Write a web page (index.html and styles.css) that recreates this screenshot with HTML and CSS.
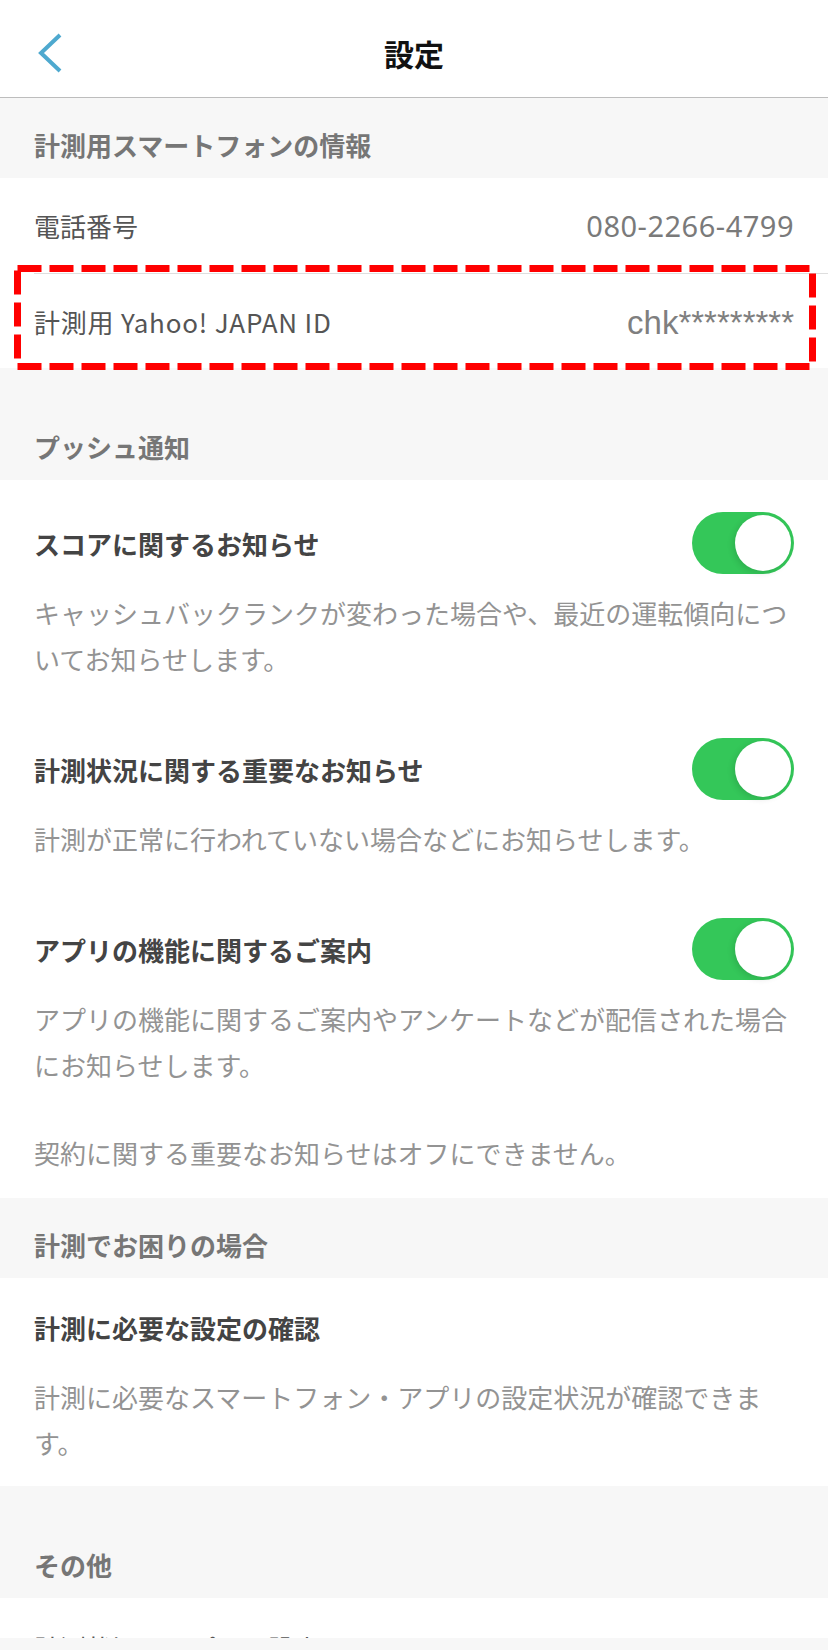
FILE: index.html
```html
<!DOCTYPE html>
<html lang="ja">
<head>
  <meta charset="UTF-8" />
  <meta name="viewport" content="width=device-width, initial-scale=1.0"/>
  <title>設定</title>
  <link rel="stylesheet" href="styles.css">
</head>
<body>

  <div class="screen">
    <header class="nav">
      <button class="nav-back" aria-label="戻る">
        <svg width="26" height="40" viewBox="0 0 26 40"><path d="M22 2 L3 20 L22 38" fill="none" stroke="#4ea9cf" stroke-width="4"/></svg>
      </button>
      <h1 class="nav-title">設定</h1>
      <span></span>
    </header>

    <div class="section-title">計測用スマートフォンの情報</div>
    <div class="info-list">
      <div class="info-row">
        <span class="info-label">電話番号</span>
        <span class="info-value">080-2266-4799</span>
      </div>
      <div class="info-row">
        <span class="info-label latin">計測用 Yahoo! JAPAN ID</span>
        <span class="info-value masked">chk*********</span>
        <svg class="highlight" width="802" height="105" viewBox="0 0 802 105">
          <rect x="3.5" y="3.5" width="795" height="98" fill="none" stroke="#ff0000" stroke-width="7" stroke-dasharray="24 8"/>
        </svg>
      </div>
    </div>

    <div class="section-title spaced">プッシュ通知</div>
    <div class="block notify">
      <div class="item">
        <div class="item-head">
          <span class="item-title">スコアに関するお知らせ</span>
          <span class="toggle on"></span>
        </div>
        <p class="item-desc">キャッシュバックランクが変わった場合や、最近の運転傾向についてお知らせします。</p>
      </div>
      <div class="item">
        <div class="item-head">
          <span class="item-title">計測状況に関する重要なお知らせ</span>
          <span class="toggle on"></span>
        </div>
        <p class="item-desc">計測が正常に行われていない場合などにお知らせします。</p>
      </div>
      <div class="item">
        <div class="item-head">
          <span class="item-title">アプリの機能に関するご案内</span>
          <span class="toggle on"></span>
        </div>
        <p class="item-desc">アプリの機能に関するご案内やアンケートなどが配信された場合にお知らせします。</p>
      </div>
      <p class="item-desc note">契約に関する重要なお知らせはオフにできません。</p>
    </div>

    <div class="section-title">計測でお困りの場合</div>
    <div class="block">
      <div class="item">
        <div class="item-head">
          <span class="item-title">計測に必要な設定の確認</span>
        </div>
        <p class="item-desc">計測に必要なスマートフォン・アプリの設定状況が確認できます。</p>
      </div>
    </div>

    <div class="section-title spaced">その他</div>
    <div class="block">
      <div class="item">
        <div class="item-head">
          <span class="info-label">計測状況とアプリの設定</span>
        </div>
      </div>
    </div>
  </div>

</body>
</html>
```

FILE: styles.css
```css
:root {
  --gray-bg: #f7f7f7;
  --green: #34c759;
  --line: #dedede;
}
* {
  box-sizing: border-box;
  margin: 0;
  padding: 0;
}
html, body {
  font-family: "Noto Sans CJK JP", sans-serif;
  width: 100%;
}
body {
  background: var(--gray-bg);
}
.screen {
  height: 1638px;
  overflow: hidden;
  background: var(--gray-bg);
}

/* top bar */
.nav {
  height: 98px;
  padding-top: 8px;
  background: #fff;
  border-bottom: 1px solid #bdbdbd;
  display: grid;
  grid-template-columns: 120px 1fr 120px;
  align-items: center;
}
.nav-back {
  background: none;
  border: none;
  padding-left: 38px;
  display: flex;
  align-items: center;
}
.nav-title {
  text-align: center;
  font-size: 30px;
  font-weight: bold;
  line-height: 1;
  color: #111;
}

/* grey section headings */
.section-title {
  padding: 29px 34px 15px;
  font-size: 26px;
  line-height: 36px;
  font-weight: bold;
  color: #767676;
}
.section-title.spaced {
  padding-top: 61px;
}

/* key / value rows */
.info-list {
  background: #fff;
  padding-left: 34px;
}
.info-row {
  position: relative;
  min-height: 95px;
  padding-right: 34px;
  display: flex;
  align-items: center;
  justify-content: space-between;
}
.info-row + .info-row {
  border-top: 1px solid var(--line);
}
.info-label {
  font-size: 26px;
  color: #555;
}
.info-label.latin {
  letter-spacing: 0.8px;
}
.info-value {
  font-family: "Noto Sans", "Noto Sans CJK JP", sans-serif;
  font-size: 29px;
  letter-spacing: 0.5px;
  color: #7a7a7a;
}
.info-value.masked {
  font-family: "Liberation Sans", sans-serif;
  font-size: 33px;
  letter-spacing: 0;
  color: #7f7f7f;
  padding-top: 4px;
}
.highlight {
  position: absolute;
  left: -20px;
  top: -9px;
}

/* white blocks with items */
.block {
  background: #fff;
  padding: 18px 34px 20px;
}
.block.notify {
  padding: 32px 34px 22px;
}
.item + .item {
  margin-top: 56px;
}
.item-head {
  min-height: 62px;
  display: flex;
  align-items: center;
  justify-content: space-between;
}
.item-title {
  font-size: 26px;
  font-weight: bold;
  color: #444;
}
.item-desc {
  margin-top: 16px;
  font-size: 26px;
  line-height: 46px;
  color: #939393;
}
.item-desc.note {
  margin-top: 42px;
}

/* switch */
.toggle {
  position: relative;
  width: 102px;
  height: 62px;
  border-radius: 31px;
  background: #e5e5ea;
  flex-shrink: 0;
}
.toggle.on {
  background: var(--green);
}
.toggle::after {
  content: "";
  position: absolute;
  top: 3px;
  left: 3px;
  width: 56px;
  height: 56px;
  border-radius: 50%;
  background: #fff;
  box-shadow: -2px 2px 6px rgba(0, 0, 0, 0.12);
}
.toggle.on::after {
  left: 43px;
}
```
